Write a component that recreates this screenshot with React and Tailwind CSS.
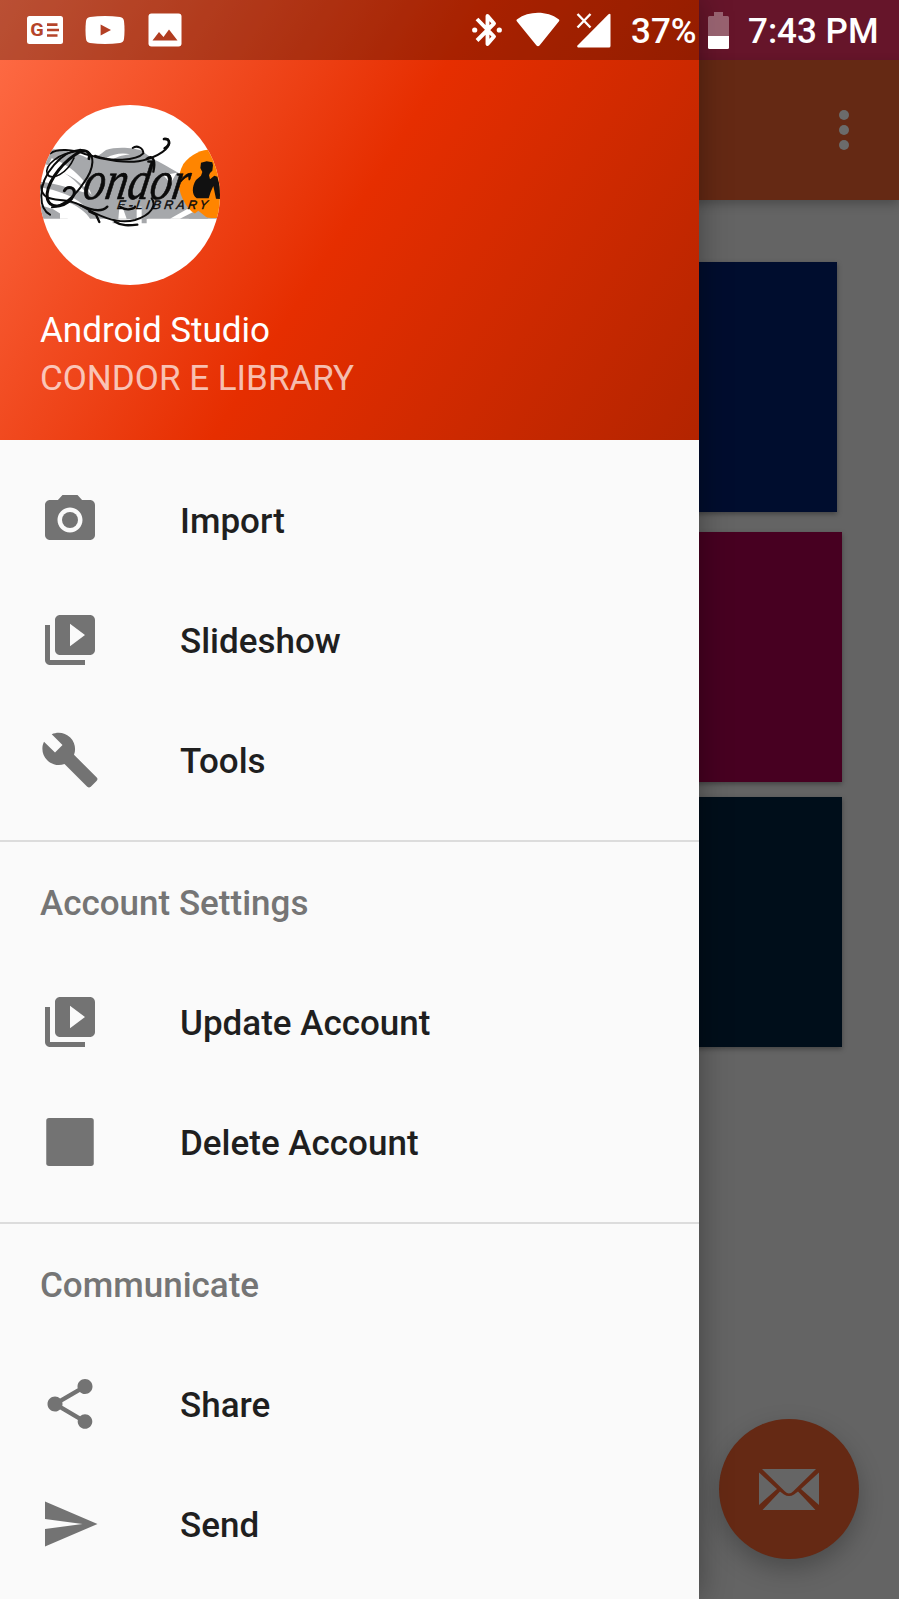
import React from "react";

const CAMERA = (
  <>
    <circle cx="12" cy="12" r="3.2" />
    <path d="M9 2L7.17 4H4c-1.1 0-2 .9-2 2v12c0 1.1.9 2 2 2h16c1.1 0 2-.9 2-2V6c0-1.1-.9-2-2-2h-3.17L15 2H9zm3 15c-2.76 0-5-2.24-5-5s2.24-5 5-5 5 2.24 5 5-2.24 5-5 5z" />
  </>
);
const SLIDES = (
  <path d="M4 6H2v14c0 1.1.9 2 2 2h14v-2H4V6zm16-4H8c-1.1 0-2 .9-2 2v12c0 1.1.9 2 2 2h12c1.1 0 2-.9 2-2V4c0-1.1-.9-2-2-2zm-8 12.5v-9l6 4.5-6 4.5z" />
);
const WRENCH = (
  <path d="M22.7 19l-9.1-9.1c.9-2.3.4-5-1.5-6.9-2-2-5-2.4-7.4-1.3L9 6 6 9 1.6 4.7C.4 7.1.9 10.1 2.9 12.1c1.9 1.9 4.6 2.4 6.9 1.5l9.1 9.1c.4.4 1 .4 1.4 0l2.3-2.3c.5-.4.5-1.1.1-1.4z" />
);
const SQUARE = <rect x="2.5" y="2.4" width="19" height="19.2" rx="1.1" />;
const SHARE = (
  <path d="M18 16.08c-.76 0-1.44.3-1.96.77L8.91 12.7c.05-.23.09-.46.09-.7s-.04-.47-.09-.7l7.05-4.11c.54.5 1.25.81 2.04.81 1.66 0 3-1.34 3-3s-1.34-3-3-3-3 1.34-3 3c0 .24.04.47.09.7L8.04 9.81C7.5 9.31 6.79 9 6 9c-1.66 0-3 1.34-3 3s1.34 3 3 3c.79 0 1.5-.31 2.04-.81l7.12 4.16c-.05.21-.08.43-.08.65 0 1.61 1.31 2.92 2.92 2.92 1.61 0 2.92-1.31 2.92-2.92s-1.31-2.92-2.92-2.92z" />
);
const SEND = <path d="M2 21L23 12 2 3V10l15 2-15 2z" />;

function MenuItem({ icon, label }) {
  return (
    <li className="flex h-[120px] items-center pl-10">
      <svg viewBox="0 0 24 24" className="size-[60px] fill-[#737373]">{icon}</svg>
      <span className="ml-20 pt-[3px] text-[35px] leading-[41px] font-medium text-[#1f1f1f]">{label}</span>
    </li>
  );
}

function Section({ title }) {
  return (
    <>
      <div className="mt-5 h-[2px] shrink-0 bg-[#dcdcdc]" />
      <h2 className="flex h-[120px] items-center pl-10 pt-[3px] text-[35px] leading-[41px] font-medium text-[#757575]">
        {title}
      </h2>
    </>
  );
}

function Avatar() {
  return (
    <svg viewBox="60 45 540 540" className="size-[180px] rounded-full bg-white">
      {/* grey condor wings */}
      <g fill="#a6a8ab">
        <path d="M60 178H115C200 190 265 235 330 300L385 386H210C190 350 120 320 60 315V275C110 280 170 300 200 310C150 250 100 225 60 220Z" />
        <path d="M190 212C215 210 240 195 258 180C285 170 340 172 365 182L398 206C440 225 470 250 500 258L530 330L460 386H280C300 330 240 250 190 212Z" />
        <path d="M60 345L100 358L145 386H60ZM450 386L520 340L600 386ZM278 380H380V400H365V388H286V400H278Z" />
      </g>
      <g fill="#fff">
        <path d="M258 205C280 190 310 188 330 193C305 196 285 202 275 212ZM430 256L470 248L452 280Z" />
        <path d="M95 205C150 225 200 270 215 315C170 260 125 240 80 236ZM60 292C110 300 160 318 190 345C140 325 100 325 60 330Z" />
        <path d="M450 386L535 338L550 350L480 386ZM120 360L155 386H120ZM300 330L320 386H295ZM350 350H365V386H350Z" />
      </g>
      <path d="M600 182C570 172 520 180 490 222C470 260 470 300 498 345C520 380 560 386 600 384Z" fill="#ff8500" />
      <path d="M505 386L535 362L565 386Z" fill="#a6a8ab" />
      {/* seated figure */}
      <path d="M543 218L560 214L577 217L579 226L577 242L570 249L567 256L570 268L583 257L592 260L600 290V327L588 326L580 288L572 306L566 325H530C515 315 515 290 528 270L543 257L547 246L541 234Z" fill="#111" />
      {/* lettering */}
      <g fill="#0b0b0b" fontStyle="italic">
        <text x="0" y="0" transform="translate(184 327) skewX(-10)" fontSize="165" fontFamily="'Liberation Serif', serif" textLength="318" lengthAdjust="spacingAndGlyphs" stroke="#0b0b0b" strokeWidth="2">ondor</text>
        <text x="0" y="0" transform="translate(290 358) skewX(-8)" fontSize="37" fontFamily="'Liberation Sans', sans-serif" textLength="272" lengthAdjust="spacing" stroke="#0b0b0b" strokeWidth="1.2">E-LIBRARY</text>
      </g>
      {/* flourishes */}
      <g fill="none" stroke="#0b0b0b" strokeLinecap="round">
        <path d="M207 206C214 180 190 176 165 194C115 228 75 290 82 326C90 362 145 350 162 314C168 290 142 287 133 302" strokeWidth="9" />
        <path d="M178 180C130 182 62 250 64 320C64 350 74 365 90 374" strokeWidth="6" />
        <path d="M162 204C142 250 94 275 82 252C72 225 118 188 172 184" strokeWidth="5" />
        <path d="M180 179C236 184 220 240 190 280C165 320 125 350 96 352" strokeWidth="6" />
        <path d="M92 190C110 175 160 178 195 192C250 210 330 225 380 208C430 192 460 165 443 147" strokeWidth="6" />
        <path d="M432 147C450 145 453 164 434 175" strokeWidth="8" />
        <path d="M225 197C270 216 350 212 370 190C370 172 350 165 338 174" strokeWidth="6" />
        <path d="M380 207C400 190 407 215 400 245" strokeWidth="7" />
        <path d="M62 285C66 350 130 315 180 345C230 375 290 405 345 390C395 375 410 345 395 325" strokeWidth="6" />
        <path d="M180 345C215 362 245 368 262 350M300 350C320 365 345 355 345 350" strokeWidth="7" />
        <path d="M208 364L228 374L238 396M285 395C305 408 325 407 352 404" strokeWidth="7" />
      </g>
    </svg>
  );
}

function StatusBar() {
  return (
    <header className="absolute inset-x-0 top-0 flex h-[60px] items-center text-[35px] leading-[41px] font-medium text-white">
      <div className="absolute inset-y-0 left-0 w-[699px] bg-black/27" />
      <div className="relative flex flex-1 items-center pl-[27px]">
        <svg viewBox="0 0 36 28" className="h-7 w-9">
          <rect width="36" height="28" rx="2.5" fill="#fff" />
          <text x="3.3" y="20.2" fontSize="18" fontWeight="700" fontFamily="Roboto, sans-serif" fill="#b5442a" textLength="13.5" lengthAdjust="spacingAndGlyphs">G</text>
          <path d="M20 8.6h10.5M20 14h12M20 19.5h10.5" stroke="#b5442a" strokeWidth="2.6" />
        </svg>
        <svg viewBox="0 0 40 28" className="ml-[22px] h-7 w-10">
          <path d="M5 1Q20-.8 35 1Q38.500 1.500 39 5Q40 14 39 23Q38.500 26.500 35 27Q20 28.800 5 27Q1.500 26.500 1 23Q0 14 1 5Q1.500 1.500 5 1Z" fill="#fff" />
          <path d="M15.600 8.500L26 14L15.600 19.500Z" fill="#b33f24" />
        </svg>
        <svg viewBox="0 0 34 34" className="ml-[23px] size-[34px]">
          <rect x=".5" y=".5" width="33" height="33" rx="3" fill="#fff" />
          <path d="M4.500 27.500L11 19L15.500 24L21 16.500L29.500 27.500Z" fill="#b13c20" />
        </svg>
      </div>
      <svg viewBox="0 0 30 36" className="relative mr-[14px] h-9 w-[30px]">
        <path d="M5 7L22 24.500L15.500 32V4L22 11.500L5 28.500" fill="none" stroke="#fff" strokeWidth="3.900" strokeLinejoin="round" />
        <circle cx="2.700" cy="18" r="2.600" fill="#fff" />
        <circle cx="27.300" cy="18" r="2.600" fill="#fff" />
      </svg>
      <svg viewBox="0 0 44 36" className="relative mr-[16px] h-9 w-11">
        <path d="M1 9.500Q-.2 8.200 1.200 7.200C13-1.300 31-1.300 42.600 7.200Q44 8.200 42.800 9.500L23.500 33.500Q22 35 20.500 33.500Z" fill="#fff" />
      </svg>
      <svg viewBox="0 0 36 36" className="relative mr-[19px] size-9">
        <path d="M34.500 3V34Q34.500 35.500 33 35.500H2Q.5 35 1.500 33.500L32.500 2.300Q34.500 1 34.500 3Z" fill="#fff" />
        <path d="M1.500 2L14.500 15.500M14.500 2L1.500 15.500" stroke="#fff" strokeWidth="2.400" />
      </svg>
      <span className="relative w-[65px] whitespace-nowrap pt-[3px]">37%</span>
      <svg viewBox="0 0 21 37" className="relative ml-[12px] h-[37px] w-[21px]">
        <path d="M6 0H15V4H19.500Q21 4 21 5.500V24H0V5.500Q0 4 1.500 4H6Z" fill="#fff" opacity=".33" />
        <path d="M0 24H21V35.500Q21 37 19.500 37H1.500Q0 37 0 35.500Z" fill="#fff" />
      </svg>
      <time className="w-[170px] whitespace-nowrap pl-[19px] pt-[3px]">7:43 PM</time>
    </header>
  );
}

export default function App() {
  return (
    <div className="relative h-[1599px] w-[899px] overflow-hidden bg-[#646464] font-[Roboto,sans-serif]">
      {/* dimmed screen behind the drawer */}
      <main className="flex h-full flex-col">
        <div className="h-[60px] bg-[#66152a]" />
        <div className="flex h-[140px] items-center justify-end bg-[#652914] pr-[50px] shadow-[0_4px_10px_rgba(0,0,0,0.25)]">
          <div className="flex flex-col gap-[5px]">
            <i className="size-[10px] rounded-full bg-[#6b6b6b]" />
            <i className="size-[10px] rounded-full bg-[#6b6b6b]" />
            <i className="size-[10px] rounded-full bg-[#6b6b6b]" />
          </div>
        </div>
        <div className="flex flex-col items-end pt-[62px] pr-[57px]">
          <div className="mr-[5px] h-[250px] w-[350px] bg-[#000d2e] shadow-[0_2px_5px_rgba(0,0,0,0.35)]" />
          <div className="mt-5 h-[250px] w-[350px] bg-[#470021] shadow-[0_2px_5px_rgba(0,0,0,0.35)]" />
          <div className="mt-[15px] h-[250px] w-[350px] bg-[#000e1a] shadow-[0_2px_5px_rgba(0,0,0,0.35)]" />
        </div>
      </main>
      <button className="absolute right-10 bottom-10 flex size-[140px] items-center justify-center rounded-full bg-[#652914] shadow-[0_10px_24px_rgba(0,0,0,0.25)]">
        <svg viewBox="0 0 60 41" className="h-[41px] w-[60px] fill-[#656565]">
          <path d="M3 0H57L34 22.500Q30 26.500 26 22.500Z" />
          <path d="M0 3.500L18 20L0 36ZM60 3.500L42 20L60 36Z" />
          <path d="M3.500 41L21 22.500L25 25.500Q30 28.500 35 25.500L39 22.500L56.500 41Z" />
        </svg>
      </button>

      <aside className="absolute inset-y-0 left-0 flex w-[699px] flex-col bg-[#fafafa] shadow-[0_0_30px_rgba(0,0,0,0.35)]">
        <div className="flex h-[440px] shrink-0 flex-col items-start bg-[linear-gradient(122.15deg,#ff6e48,#e62e00_50%,#b32400)] pt-[105px] pl-10 text-[35px] leading-[41px] text-white">
          <Avatar />
          <p className="mt-[25px]">Android Studio</p>
          <p className="mt-[7px] text-white/70">CONDOR E LIBRARY</p>
        </div>
        <nav className="pt-5">
          <ul>
            <MenuItem icon={CAMERA} label="Import" />
            <MenuItem icon={SLIDES} label="Slideshow" />
            <MenuItem icon={WRENCH} label="Tools" />
          </ul>
          <Section title="Account Settings" />
          <ul>
            <MenuItem icon={SLIDES} label="Update Account" />
            <MenuItem icon={SQUARE} label="Delete Account" />
          </ul>
          <Section title="Communicate" />
          <ul>
            <MenuItem icon={SHARE} label="Share" />
            <MenuItem icon={SEND} label="Send" />
          </ul>
        </nav>
      </aside>
      <StatusBar />
    </div>
  );
}
